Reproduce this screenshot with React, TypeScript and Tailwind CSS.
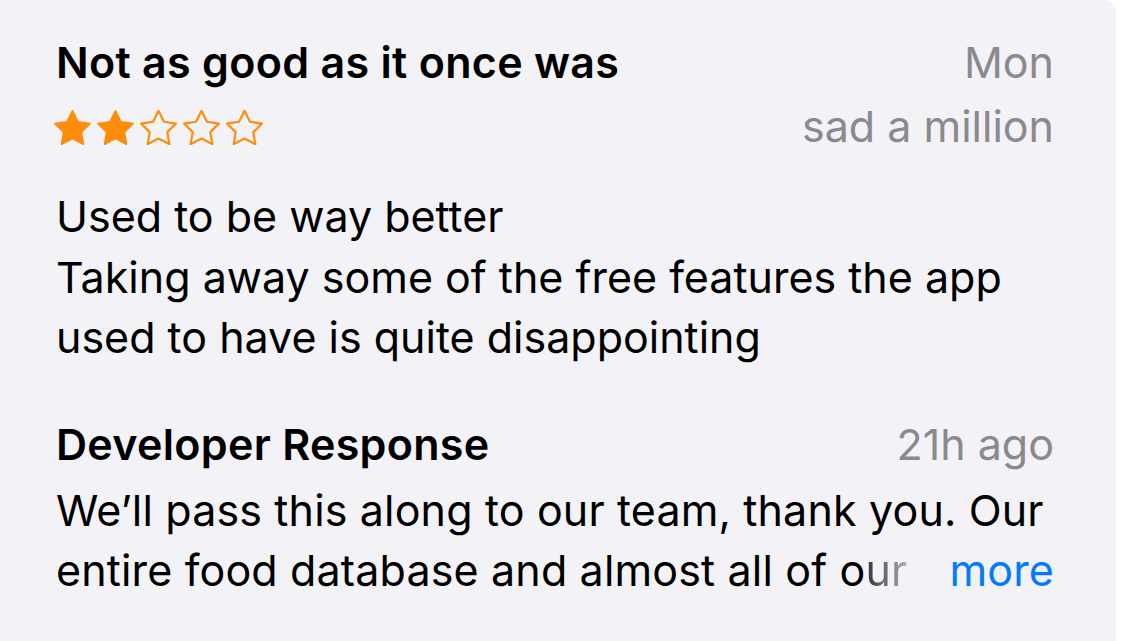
import React from "react";

const STAR = "M12 2.6l2.76 5.6 6.18.9-4.47 4.36 1.06 6.15L12 16.7l-5.53 2.9 1.06-6.15L3.06 9.1l6.18-.9L12 2.6z";

function Star({ filled }: { filled: boolean }) {
  return (
    <svg width="37" height="35" viewBox="2.6 2.2 18.8 17.8" className="shrink-0">
      <path
        d={STAR}
        fill={filled ? "#ff8c0a" : "none"}
        stroke="#ff8c0a"
        strokeWidth={filled ? 0.9 : 1.1}
        strokeLinejoin="round"
      />
    </svg>
  );
}

export default function App() {
  return (
    <div className="w-[1122px] h-[641px] bg-white overflow-hidden" style={{ fontFamily: "Inter, 'Noto Sans', sans-serif" }}>
      <div className="w-[1116px] h-[641px] bg-[#f2f2f7] rounded-tr-[12px] pl-[56px] pr-[62px] pt-[30px] text-[43px] text-black">
        <div className="flex justify-between">
          <div className="flex flex-col">
            <div className="h-[64px] leading-[64px] font-semibold tracking-[0.3px]">Not as good as it once was</div>
            <div className="h-[64px] flex items-center gap-[6px] -ml-[2px] pt-[2px]">
              <Star filled />
              <Star filled />
              <Star filled={false} />
              <Star filled={false} />
              <Star filled={false} />
            </div>
          </div>
          <div className="flex flex-col items-end text-[#8a8a8e]">
            <div className="h-[64px] leading-[64px]">Mon</div>
            <div className="h-[64px] leading-[64px]">sad a million</div>
          </div>
        </div>
        <div className="mt-[28px] leading-[60.5px] whitespace-nowrap">
          <div>Used to be way better</div>
          <div>Taking away some of the free features the app</div>
          <div>used to have is quite disappointing</div>
        </div>
        <div className="mt-[46px] flex justify-between h-[60px] leading-[60px]">
          <div className="font-semibold tracking-[0.3px]">Developer Response</div>
          <div className="text-[#8a8a8e]">21h ago</div>
        </div>
        <div className="mt-[6px] leading-[60px] whitespace-nowrap tracking-[0.15px]">
          <div>We’ll pass this along to our team, thank you. Our</div>
          <div className="flex justify-between">
            <span>
              entire food database and almost all of o
              <span className="bg-gradient-to-r from-[#333] to-[#b0b0b4] bg-clip-text text-transparent">ur</span>
            </span>
            <span className="text-[#007aff]">more</span>
          </div>
        </div>
      </div>
    </div>
  );
}
